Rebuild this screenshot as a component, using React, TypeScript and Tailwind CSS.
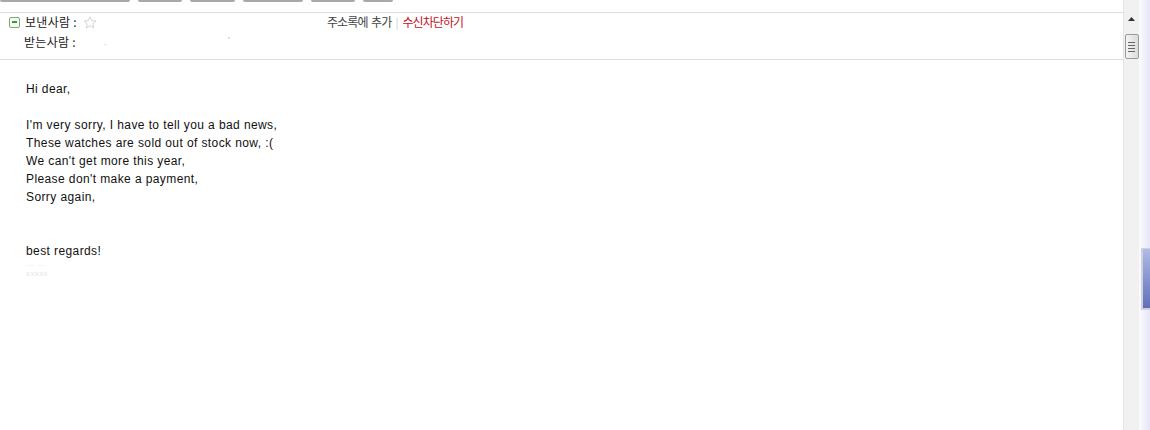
import React from "react";

const btns = [
  { l: 0, w: 130 },
  { l: 138, w: 44 },
  { l: 190, w: 45 },
  { l: 243, w: 60 },
  { l: 311, w: 44 },
  { l: 363, w: 30 },
];

export default function App() {
  const kr = { fontFamily: '"Noto Sans CJK KR", "Liberation Sans", sans-serif' };
  const en = { fontFamily: '"Liberation Sans", "Noto Sans CJK KR", sans-serif' };
  return (
    <div className="flex w-[1150px] h-[430px] overflow-hidden bg-white">
      <div className="flex flex-col w-[1123px] h-full">
        {/* top toolbar remnants */}
        <div className="flex h-[13px] gap-[8px] border-b border-[#dcdcdc]">
          {btns.map((b, i) => (
            <div
              key={i}
              className="h-[2px] rounded-b-[2px] bg-[#a8a8a8]"
              style={{ width: b.w }}
            />
          ))}
        </div>
        {/* header */}
        <div className="flex flex-col h-[47px] border-b border-[#dedede] text-[12px] text-[#222]" style={kr}>
          <div className="flex items-center h-[16px] mt-[1px] pl-[9px]">
            <div className="flex items-center justify-center w-[11px] h-[11px] border border-[#7aa87a] rounded-[2px] bg-[#f4fbf4]">
              <div className="w-[5px] h-[1.5px] bg-[#3a9a3a]" />
            </div>
            <span className="ml-[5px] leading-[16px] tracking-[0.3px]">보낸사람 :</span>
            <svg width="14" height="13" viewBox="0 0 14 13" className="ml-[6px]">
              <polygon
                points="7,0.8 8.8,4.7 13,5 9.8,7.8 10.8,12 7,9.7 3.2,12 4.2,7.8 1,5 5.2,4.7"
                fill="none"
                stroke="#d4d4d4"
                strokeWidth="1"
              />
            </svg>
            <span className="ml-[230px] leading-[16px] text-[#444] tracking-[-0.9px] whitespace-pre">주소록에  추가</span>
            <span className="ml-[4px] text-[#ccc] text-[11px]">|</span>
            <span className="ml-[4px] leading-[16px] text-[#c4121a] tracking-[-0.9px]">수신차단하기</span>
          </div>
          <div className="flex items-center h-[16px] mt-[4px] pl-[24px]">
            <span className="leading-[16px] tracking-[0.3px]">받는사람 :</span>
            <span className="ml-[28px] text-[#ccc] text-[9px]">.</span>
            <span className="ml-[120px] text-[#aaa] text-[9px]">`</span>
          </div>
        </div>
        {/* body */}
        <div className="pt-[20px] pl-[26px] text-[12px] leading-[18px] text-[#111] tracking-[0.4px]" style={en}>
          <div>Hi dear,</div>
          <div className="h-[18px]" />
          <div>I'm very sorry, I have to tell you a bad news,</div>
          <div>These watches are sold out of stock now, :(</div>
          <div>We can't get more this year,</div>
          <div>Please don't make a payment,</div>
          <div>Sorry again,</div>
          <div className="h-[36px]" />
          <div>best regards!</div>
          <div className="text-[8px] leading-[9px] text-[#eeeeee]">— —</div>
          <div className="text-[8px] leading-[9px] text-[#e6e6e6]">xxxxx</div>
        </div>
      </div>
      {/* scrollbar */}
      <div className="flex flex-col items-center w-[16px] h-full bg-[#f1f1f1] border-l border-[#e4e4e4] pt-[17px]">
        <svg width="7" height="4" viewBox="0 0 7 4">
          <polygon points="3.5,0 7,4 0,4" fill="#333" />
        </svg>
        <div className="mt-[13px] flex flex-col items-center justify-center gap-[2px] w-[14px] h-[25px] border border-[#9a9a9a] rounded-[2px] bg-gradient-to-r from-[#f4f4f4] to-[#dcdcdc]">
          <div className="w-[7px] h-[1px] bg-[#666]" />
          <div className="w-[7px] h-[1px] bg-[#666]" />
          <div className="w-[7px] h-[1px] bg-[#666]" />
          <div className="w-[7px] h-[1px] bg-[#666]" />
        </div>
      </div>
      {/* right background strip */}
      <div className="flex flex-col w-[11px] h-full bg-gradient-to-r from-[#fbfbfe] to-[#e6e6f6]">
        <div className="h-[248px]" />
        <div className="ml-[2px] w-[9px] h-[62px] border-l-2 border-t border-b-2 border-[#d0d0e0] bg-gradient-to-b from-[#b0bce4] to-[#6070b8]" />
      </div>
    </div>
  );
}
